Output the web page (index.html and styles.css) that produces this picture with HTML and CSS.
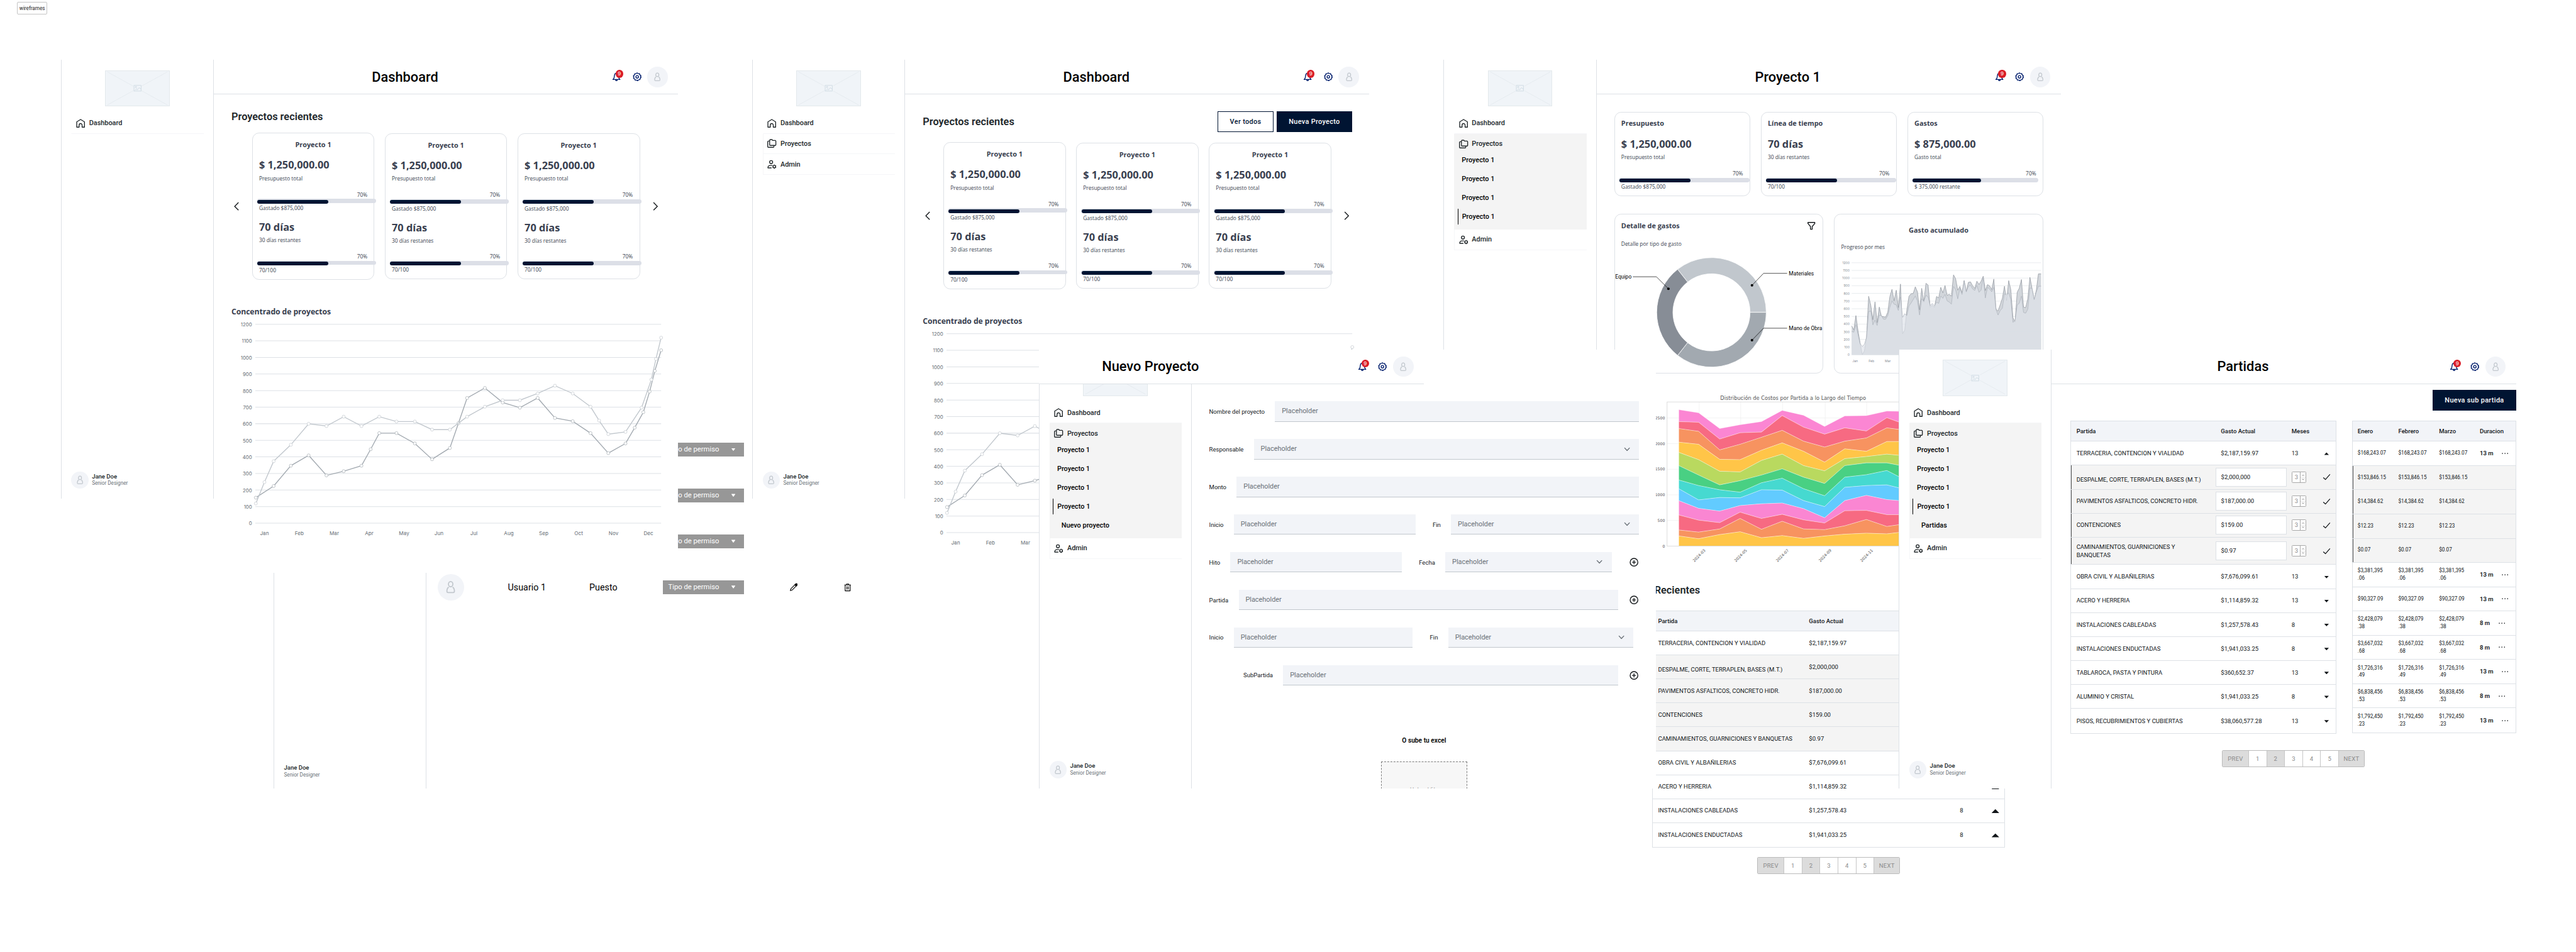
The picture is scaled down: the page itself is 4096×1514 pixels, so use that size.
FILE: index.html
```html
<!DOCTYPE html>
<html lang="es">
<head>
<meta charset="utf-8">
<title>wireframes</title>
<link rel="stylesheet" href="styles.css">
</head>
<body>
<div class="board">
<svg class="sprite" aria-hidden="true">
  <symbol id="i-bell" viewBox="0 0 24 24"><path d="M3.8 18.2h16.4l-2.6-3.4-1-6.3C16.200 5.500 14.400 3.500 12 3.500S7.800 5.500 7.400 8.500l-1 6.300z"/><path d="M9.800 18.800a2.200 2.200 0 0 0 4.400 0"/></symbol>
  <symbol id="i-gear" viewBox="0 0 24 24"><circle cx="12" cy="12" r="8.200"/><circle cx="12" cy="12" r="9.500" stroke-width="1.200" stroke-dasharray="3.200 2.770"/><circle cx="12" cy="12" r="3"/></symbol>
  <symbol id="i-user" viewBox="0 0 24 24"><ellipse cx="12" cy="7.300" rx="3.600" ry="4.300"/><path d="M8.800 12.300C6.500 13.500 5.800 16 5.800 19c0 1.500.7 2.200 2.200 2.200h8c1.500 0 2.200-.7 2.200-2.200 0-3-.7-5.500-3-6.700"/></symbol>
  <symbol id="i-home" viewBox="0 0 24 24"><path d="M3 21V8.500L12 3l9 5.500V21h-5.500v-5a3.500 3.500 0 0 0-7 0v5z"/></symbol>
  <symbol id="i-folder" viewBox="0 0 24 24"><path d="M8 3h4.500L14.500 5H20a1.500 1.500 0 0 1 1.500 1.500V15a1.500 1.500 0 0 1-1.500 1.500H8.500A1.500 1.500 0 0 1 7 15V4.500z"/><path d="M6.500 6.500H4A1.500 1.500 0 0 0 2.500 8v11.500A1.500 1.500 0 0 0 4 21h11.500a1.500 1.500 0 0 0 1.500-1.500v-2.500"/></symbol>
  <symbol id="i-admin" viewBox="0 0 24 24"><circle cx="10.500" cy="7" r="3.600"/><path d="M13 14.800H8.500c-3.500 0-5.500 1.700-5.500 5.700h8.500"/><circle cx="18" cy="17.500" r="3"/><path d="M18 12.700v2M18 20.300v2M13.900 15.100l1.700 1M20.400 18.900l1.700 1M13.900 19.900l1.700-1M20.400 16.100l1.700-1"/></symbol>
  <symbol id="i-left" viewBox="0 0 24 24"><path d="M16.500 3 7.500 12l9 9"/></symbol>
  <symbol id="i-right" viewBox="0 0 24 24"><path d="M7.500 3l9 9-9 9"/></symbol>
  <symbol id="i-down" viewBox="0 0 24 24"><path d="M6 9l6 6.500L18 9"/></symbol>
  <symbol id="i-plus" viewBox="0 0 24 24"><circle cx="12" cy="12" r="9"/><path d="M12 7.500v9M7.500 12h9"/></symbol>
  <symbol id="i-check" viewBox="0 0 24 24"><path d="M3.500 13.500 9 18.500 20.500 5.500"/></symbol>
  <symbol id="i-funnel" viewBox="0 0 24 24"><path d="M4 4h16v2.500l-6 7V20h-4v-6.500l-6-7z"/></symbol>
  <symbol id="i-dots" viewBox="0 0 24 24"><path d="M4 12h.01M12 12h.01M20 12h.01"/></symbol>
  <symbol id="i-pencil" viewBox="0 0 24 24"><path d="M3 21l1.500-5L15.500 5l3.500 3.500L8 19.500z"/><path d="M16 3.500l4.500 4.500L22 5.500a2.500 2.500 0 0 0-3.500-3.500z" fill="currentColor"/></symbol>
  <symbol id="i-trash" viewBox="0 0 24 24"><path d="M3 5h18M9 4.500V2.500h6v2M5 5v16.500h14V5M10 9v9M14 9v9"/></symbol>
  <symbol id="i-image" viewBox="0 0 20 16"><rect x="1.500" y="1.200" width="16.500" height="13.300"/><circle cx="6" cy="5" r="1.500"/><path d="M4 12.500l3.500-3.500 1.500 1.500M8.500 12.500l5-6 4.500 3.500"/></symbol>
</svg>

<div class="tag">wireframes</div>

<!-- Usuarios -->
<section class="frame frame--users">
  <aside class="side">
    <div class="profile profile--bare"><div><b>Jane Doe</b><span>Senior Designer</span></div></div>
  </aside>
  <main class="users">
    <div class="users__row"><span class="chip">Tipo de permiso<i class="tri tri--down"></i></span></div>
    <div class="users__row"><span class="chip">Tipo de permiso<i class="tri tri--down"></i></span></div>
    <div class="users__row"><span class="chip">Tipo de permiso<i class="tri tri--down"></i></span></div>
    <div class="users__row">
      <span class="avatar avatar--lg"><svg class="icon"><use href="#i-user"/></svg></span>
      <span class="users__name">Usuario 1</span><span class="users__job">Puesto</span>
      <span class="chip">Tipo de permiso<i class="tri tri--down"></i></span>
      <svg class="icon users__edit"><use href="#i-pencil"/></svg><svg class="icon users__del"><use href="#i-trash"/></svg>
    </div>
  </main>
</section>

<!-- Dashboard -->
<section class="frame frame--dash">
  <aside class="side">
    <div class="logo"><svg class="logo__x" viewBox="0 0 151 84"><path d="M3 2l145 80M148 2L3 82"/></svg><svg class="logo__img"><use href="#i-image"/></svg></div>
    <nav class="menu menu--plain">
      <a class="menu__item"><svg class="icon"><use href="#i-home"/></svg>Dashboard</a>
    </nav>
    <div class="profile"><span class="avatar avatar--sm"><svg class="icon"><use href="#i-user"/></svg></span><div><b>Jane Doe</b><span>Senior Designer</span></div></div>
  </aside>
  <main class="main main--tall">
    <header class="topbar"><h1>Dashboard</h1><div class="actions"><span class="bell"><svg class="icon"><use href="#i-bell"/></svg><em>9</em></span><svg class="icon gear"><use href="#i-gear"/></svg><span class="avatar"><svg class="icon"><use href="#i-user"/></svg></span></div></header>
    <div class="content">
      <div class="head"><h2>Proyectos recientes</h2></div>
      <div class="carousel">
        <svg class="icon"><use href="#i-left"/></svg>
        <article class="card card--first"><h3>Proyecto 1</h3><strong>$ 1,250,000.00</strong><p>Presupuesto total</p><p class="pct">70%</p><div class="bar"><i></i></div><p class="foot">Gastado $875,000</p><strong class="days">70 días</strong><p>30 días restantes</p><p class="pct">70%</p><div class="bar"><i></i></div><p class="foot last">70/100</p></article>
        <article class="card"><h3>Proyecto 1</h3><strong>$ 1,250,000.00</strong><p>Presupuesto total</p><p class="pct">70%</p><div class="bar"><i></i></div><p class="foot">Gastado $875,000</p><strong class="days">70 días</strong><p>30 días restantes</p><p class="pct">70%</p><div class="bar"><i></i></div><p class="foot last">70/100</p></article>
        <article class="card"><h3>Proyecto 1</h3><strong>$ 1,250,000.00</strong><p>Presupuesto total</p><p class="pct">70%</p><div class="bar"><i></i></div><p class="foot">Gastado $875,000</p><strong class="days">70 días</strong><p>30 días restantes</p><p class="pct">70%</p><div class="bar"><i></i></div><p class="foot last">70/100</p></article>
        <svg class="icon"><use href="#i-right"/></svg>
      </div>
      <h3 class="chart-title">Concentrado de proyectos</h3>
      <svg class="line-chart" viewBox="0 0 1004 520"></svg>
    </div>
  </main>
</section>

<!-- Dashboard, administrador -->
<section class="frame frame--dash2">
  <aside class="side">
    <div class="logo"><svg class="logo__x" viewBox="0 0 151 84"><path d="M3 2l145 80M148 2L3 82"/></svg><svg class="logo__img"><use href="#i-image"/></svg></div>
    <nav class="menu">
      <a class="menu__item"><svg class="icon"><use href="#i-home"/></svg>Dashboard</a>
      <a class="menu__item"><svg class="icon"><use href="#i-folder"/></svg>Proyectos</a>
      <a class="menu__item"><svg class="icon"><use href="#i-admin"/></svg>Admin</a>
    </nav>
    <div class="profile"><span class="avatar avatar--sm"><svg class="icon"><use href="#i-user"/></svg></span><div><b>Jane Doe</b><span>Senior Designer</span></div></div>
  </aside>
  <main class="main main--tall">
    <header class="topbar"><h1>Dashboard</h1><div class="actions"><span class="bell"><svg class="icon"><use href="#i-bell"/></svg><em>9</em></span><svg class="icon gear"><use href="#i-gear"/></svg><span class="avatar"><svg class="icon"><use href="#i-user"/></svg></span></div></header>
    <div class="content">
      <div class="head head--buttons"><h2>Proyectos recientes</h2><a class="btn btn--line">Ver todos</a><a class="btn">Nueva Proyecto</a></div>
      <div class="carousel">
        <svg class="icon"><use href="#i-left"/></svg>
        <article class="card card--first"><h3>Proyecto 1</h3><strong>$ 1,250,000.00</strong><p>Presupuesto total</p><p class="pct">70%</p><div class="bar"><i></i></div><p class="foot">Gastado $875,000</p><strong class="days">70 días</strong><p>30 días restantes</p><p class="pct">70%</p><div class="bar"><i></i></div><p class="foot last">70/100</p></article>
        <article class="card"><h3>Proyecto 1</h3><strong>$ 1,250,000.00</strong><p>Presupuesto total</p><p class="pct">70%</p><div class="bar"><i></i></div><p class="foot">Gastado $875,000</p><strong class="days">70 días</strong><p>30 días restantes</p><p class="pct">70%</p><div class="bar"><i></i></div><p class="foot last">70/100</p></article>
        <article class="card"><h3>Proyecto 1</h3><strong>$ 1,250,000.00</strong><p>Presupuesto total</p><p class="pct">70%</p><div class="bar"><i></i></div><p class="foot">Gastado $875,000</p><strong class="days">70 días</strong><p>30 días restantes</p><p class="pct">70%</p><div class="bar"><i></i></div><p class="foot last">70/100</p></article>
        <svg class="icon"><use href="#i-right"/></svg>
      </div>
      <h3 class="chart-title">Concentrado de proyectos</h3>
      <svg class="line-chart" viewBox="0 0 1004 520"></svg>
    </div>
  </main>
</section>

<!-- Proyecto 1 -->
<section class="frame frame--project">
  <aside class="side">
    <div class="logo"><svg class="logo__x" viewBox="0 0 151 84"><path d="M3 2l145 80M148 2L3 82"/></svg><svg class="logo__img"><use href="#i-image"/></svg></div>
    <nav class="menu">
      <a class="menu__item"><svg class="icon"><use href="#i-home"/></svg>Dashboard</a>
      <div class="menu__group">
        <a class="menu__item"><svg class="icon"><use href="#i-folder"/></svg>Proyectos</a>
        <a class="sub">Proyecto 1</a><a class="sub">Proyecto 1</a><a class="sub">Proyecto 1</a><a class="sub sub--on">Proyecto 1</a>
      </div>
      <a class="menu__item"><svg class="icon"><use href="#i-admin"/></svg>Admin</a>
    </nav>
  </aside>
  <main class="main">
    <header class="topbar"><h1>Proyecto 1</h1><div class="actions"><span class="bell"><svg class="icon"><use href="#i-bell"/></svg><em>9</em></span><svg class="icon gear"><use href="#i-gear"/></svg><span class="avatar"><svg class="icon"><use href="#i-user"/></svg></span></div></header>
    <div class="content">
      <div class="stats">
        <article class="card"><h3>Presupuesto</h3><strong>$ 1,250,000.00</strong><p>Presupuesto total</p><p class="pct">70%</p><div class="bar"><i></i></div><p class="foot">Gastado $875,000</p></article>
        <article class="card"><h3>Línea de tiempo</h3><strong class="plain">70 días</strong><p>30 días restantes</p><p class="pct">70%</p><div class="bar"><i></i></div><p class="foot">70/100</p></article>
        <article class="card"><h3>Gastos</h3><strong>$ 875,000.00</strong><p>Gasto total</p><p class="pct">70%</p><div class="bar bar--short"><i></i></div><p class="foot">$ 375,000 restante</p></article>
      </div>
      <div class="panels">
        <article class="panel">
          <div class="panel__head"><h3>Detalle de gastos</h3><svg class="icon"><use href="#i-funnel"/></svg></div>
          <p>Detalle por tipo de gasto</p>
          <svg class="donut" viewBox="0 0 488 280"></svg>
        </article>
        <article class="panel panel--area">
          <h3>Gasto acumulado</h3>
          <p>Progreso por mes</p>
          <svg class="area-chart" viewBox="0 0 488 260"></svg>
        </article>
      </div>
      <div class="overview">
        <svg class="stack-chart" viewBox="0 0 585 430"></svg>
        <h2>Recientes</h2>
        <table class="grid grid--recent">
          <tr><th>Partida</th><th>Gasto Actual</th><th></th><th></th></tr>
          <tr><td>TERRACERIA, CONTENCION Y VIALIDAD</td><td>$2,187,159.97</td><td></td><td></td></tr>
          <tr class="child"><td class="low">DESPALME, CORTE, TERRAPLEN, BASES (M.T.)</td><td>$2,000,000</td><td></td><td></td></tr>
          <tr class="child"><td>PAVIMENTOS ASFALTICOS, CONCRETO HIDR.</td><td>$187,000.00</td><td></td><td></td></tr>
          <tr class="child"><td>CONTENCIONES</td><td>$159.00</td><td></td><td></td></tr>
          <tr class="child"><td>CAMINAMIENTOS, GUARNICIONES Y BANQUETAS</td><td>$0.97</td><td></td><td></td></tr>
          <tr><td>OBRA CIVIL Y ALBAÑILERIAS</td><td>$7,676,099.61</td><td></td><td></td></tr>
          <tr><td>ACERO Y HERRERIA</td><td>$1,114,859.32</td><td>13</td><td><i class="tri tri--big"></i></td></tr>
          <tr><td>INSTALACIONES CABLEADAS</td><td>$1,257,578.43</td><td>8</td><td><i class="tri tri--big"></i></td></tr>
          <tr><td>INSTALACIONES ENDUCTADAS</td><td>$1,941,033.25</td><td>8</td><td><i class="tri tri--big"></i></td></tr>
        </table>
        <div class="pager"><span class="on wide">PREV</span><span>1</span><span class="on">2</span><span>3</span><span>4</span><span>5</span><span class="on wide">NEXT</span></div>
      </div>
    </div>
  </main>
</section>

<!-- Nuevo proyecto -->
<section class="frame frame--new">
  <header class="topbar topbar--over"><h1>Nuevo Proyecto</h1><div class="actions"><span class="bell"><svg class="icon"><use href="#i-bell"/></svg><em>9</em></span><svg class="icon gear"><use href="#i-gear"/></svg><span class="avatar"><svg class="icon"><use href="#i-user"/></svg></span></div></header>
  <aside class="side">
    <div class="logo"><svg class="logo__x" viewBox="0 0 151 84"><path d="M3 2l145 80M148 2L3 82"/></svg></div>
    <nav class="menu">
      <a class="menu__item"><svg class="icon"><use href="#i-home"/></svg>Dashboard</a>
      <div class="menu__group">
        <a class="menu__item"><svg class="icon"><use href="#i-folder"/></svg>Proyectos</a>
        <a class="sub">Proyecto 1</a><a class="sub">Proyecto 1</a><a class="sub">Proyecto 1</a><a class="sub sub--on">Proyecto 1</a><a class="sub sub--deep">Nuevo proyecto</a>
      </div>
      <a class="menu__item"><svg class="icon"><use href="#i-admin"/></svg>Admin</a>
    </nav>
    <div class="profile"><span class="avatar avatar--sm"><svg class="icon"><use href="#i-user"/></svg></span><div><b>Jane Doe</b><span>Senior Designer</span></div></div>
  </aside>
  <main class="form">
    <div class="form__row"><label class="field"><span>Nombre del proyecto</span><b>Placeholder</b></label></div>
    <div class="form__row"><label class="field"><span>Responsable</span><b>Placeholder<svg class="icon"><use href="#i-down"/></svg></b></label></div>
    <div class="form__row"><label class="field"><span>Monto</span><b>Placeholder</b></label></div>
    <div class="form__row"><label class="field"><span>Inicio</span><b>Placeholder</b></label><label class="field"><span>Fin</span><b>Placeholder<svg class="icon"><use href="#i-down"/></svg></b></label></div>
    <div class="form__row"><label class="field"><span>Hito</span><b>Placeholder</b></label><label class="field"><span>Fecha</span><b>Placeholder<svg class="icon"><use href="#i-down"/></svg></b></label><svg class="icon"><use href="#i-plus"/></svg></div>
    <div class="form__row form__row--tight"><label class="field"><span>Partida</span><b>Placeholder</b></label><svg class="icon"><use href="#i-plus"/></svg></div>
    <div class="form__row form__row--inset"><label class="field"><span>Inicio</span><b>Placeholder</b></label><label class="field"><span>Fin</span><b>Placeholder<svg class="icon"><use href="#i-down"/></svg></b></label></div>
    <div class="form__row form__row--tight form__row--child"><label class="field"><span>SubPartida</span><b>Placeholder</b></label><svg class="icon"><use href="#i-plus"/></svg></div>
    <h4>O sube tu excel</h4>
    <div class="drop">Upload file</div>
  </main>
</section>

<!-- Partidas -->
<section class="frame frame--items">
  <aside class="side">
    <div class="logo"><svg class="logo__x" viewBox="0 0 151 84"><path d="M3 2l145 80M148 2L3 82"/></svg><svg class="logo__img"><use href="#i-image"/></svg></div>
    <nav class="menu">
      <a class="menu__item"><svg class="icon"><use href="#i-home"/></svg>Dashboard</a>
      <div class="menu__group">
        <a class="menu__item"><svg class="icon"><use href="#i-folder"/></svg>Proyectos</a>
        <a class="sub">Proyecto 1</a><a class="sub">Proyecto 1</a><a class="sub">Proyecto 1</a><a class="sub sub--on">Proyecto 1</a><a class="sub sub--deep">Partidas</a>
      </div>
      <a class="menu__item"><svg class="icon"><use href="#i-admin"/></svg>Admin</a>
    </nav>
    <div class="profile"><span class="avatar avatar--sm"><svg class="icon"><use href="#i-user"/></svg></span><div><b>Jane Doe</b><span>Senior Designer</span></div></div>
  </aside>
  <main class="main">
    <header class="topbar"><h1>Partidas</h1><div class="actions"><span class="bell"><svg class="icon"><use href="#i-bell"/></svg><em>9</em></span><svg class="icon gear"><use href="#i-gear"/></svg><span class="avatar"><svg class="icon"><use href="#i-user"/></svg></span></div></header>
    <div class="items">
      <a class="btn btn--sub">Nueva sub partida</a>
      <div class="items__tables">
        <table class="grid grid--items">
          <tr><th>Partida</th><th>Gasto Actual</th><th>Meses</th><th></th></tr>
          <tr><td>TERRACERIA, CONTENCION Y VIALIDAD</td><td>$2,187,159.97</td><td>13</td><td><i class="tri"></i></td></tr>
          <tr class="child"><td class="low">DESPALME, CORTE, TERRAPLEN, BASES (M.T.)</td><td><span class="input">$2,000,000</span></td><td><span class="spin">3<i><svg viewBox="0 0 7 12"><path d="M1.500 3.500l2-2 2 2M1.500 8.500l2 2 2-2"/></svg></i></span></td><td><svg class="icon"><use href="#i-check"/></svg></td></tr>
          <tr class="child"><td>PAVIMENTOS ASFALTICOS, CONCRETO HIDR.</td><td><span class="input">$187,000.00</span></td><td><span class="spin">3<i><svg viewBox="0 0 7 12"><path d="M1.500 3.500l2-2 2 2M1.500 8.500l2 2 2-2"/></svg></i></span></td><td><svg class="icon"><use href="#i-check"/></svg></td></tr>
          <tr class="child"><td>CONTENCIONES</td><td><span class="input">$159.00</span></td><td><span class="spin">3<i><svg viewBox="0 0 7 12"><path d="M1.500 3.500l2-2 2 2M1.500 8.500l2 2 2-2"/></svg></i></span></td><td><svg class="icon"><use href="#i-check"/></svg></td></tr>
          <tr class="child child--tall"><td>CAMINAMIENTOS, GUARNICIONES Y<br>BANQUETAS</td><td><span class="input">$0.97</span></td><td><span class="spin">3<i><svg viewBox="0 0 7 12"><path d="M1.500 3.500l2-2 2 2M1.500 8.500l2 2 2-2"/></svg></i></span></td><td><svg class="icon"><use href="#i-check"/></svg></td></tr>
          <tr><td>OBRA CIVIL Y ALBAÑILERIAS</td><td>$7,676,099.61</td><td>13</td><td><i class="tri tri--down"></i></td></tr>
          <tr><td>ACERO Y HERRERIA</td><td>$1,114,859.32</td><td>13</td><td><i class="tri tri--down"></i></td></tr>
          <tr><td>INSTALACIONES CABLEADAS</td><td>$1,257,578.43</td><td>8</td><td><i class="tri tri--down"></i></td></tr>
          <tr><td>INSTALACIONES ENDUCTADAS</td><td>$1,941,033.25</td><td>8</td><td><i class="tri tri--down"></i></td></tr>
          <tr><td>TABLAROCA, PASTA Y PINTURA</td><td>$360,652.37</td><td>13</td><td><i class="tri tri--down"></i></td></tr>
          <tr><td>ALUMINIO Y CRISTAL</td><td>$1,941,033.25</td><td>8</td><td><i class="tri tri--down"></i></td></tr>
          <tr><td>PISOS, RECUBRIMIENTOS Y CUBIERTAS</td><td>$38,060,577.28</td><td>13</td><td><i class="tri tri--down"></i></td></tr>
        </table>
        <table class="grid grid--months">
          <tr><th>Enero</th><th>Febrero</th><th>Marzo</th><th>Duracion</th></tr>
          <tr><td>$168,243.07</td><td>$168,243.07</td><td>$168,243.07</td><td><b>13 m</b><svg class="icon"><use href="#i-dots"/></svg></td></tr>
          <tr class="child"><td>$153,846.15</td><td>$153,846.15</td><td>$153,846.15</td><td></td></tr>
          <tr class="child"><td>$14,384.62</td><td>$14,384.62</td><td>$14,384.62</td><td></td></tr>
          <tr class="child"><td>$12.23</td><td>$12.23</td><td>$12.23</td><td></td></tr>
          <tr class="child"><td>$0.07</td><td>$0.07</td><td>$0.07</td><td></td></tr>
          <tr><td>$3,381,395<br>.06</td><td>$3,381,395<br>.06</td><td>$3,381,395<br>.06</td><td><b>13 m</b><svg class="icon"><use href="#i-dots"/></svg></td></tr>
          <tr><td>$90,327.09</td><td>$90,327.09</td><td>$90,327.09</td><td><b>13 m</b><svg class="icon"><use href="#i-dots"/></svg></td></tr>
          <tr><td>$2,428,079<br>.38</td><td>$2,428,079<br>.38</td><td>$2,428,079<br>.38</td><td><b>8 m</b><svg class="icon"><use href="#i-dots"/></svg></td></tr>
          <tr><td>$3,667,032<br>.68</td><td>$3,667,032<br>.68</td><td>$3,667,032<br>.68</td><td><b>8 m</b><svg class="icon"><use href="#i-dots"/></svg></td></tr>
          <tr><td>$1,726,316<br>.49</td><td>$1,726,316<br>.49</td><td>$1,726,316<br>.49</td><td><b>13 m</b><svg class="icon"><use href="#i-dots"/></svg></td></tr>
          <tr><td>$6,838,456<br>.53</td><td>$6,838,456<br>.53</td><td>$6,838,456<br>.53</td><td><b>8 m</b><svg class="icon"><use href="#i-dots"/></svg></td></tr>
          <tr><td>$1,792,450<br>.23</td><td>$1,792,450<br>.23</td><td>$1,792,450<br>.23</td><td><b>13 m</b><svg class="icon"><use href="#i-dots"/></svg></td></tr>
        </table>
      </div>
      <div class="pager"><span class="on wide">PREV</span><span>1</span><span class="on">2</span><span>3</span><span>4</span><span>5</span><span class="on wide">NEXT</span></div>
    </div>
  </main>
</section>
</div>
<script src="charts.js"></script>
</body>
</html>
```
FILE: styles.css
```css
* { box-sizing: border-box; }
html { overflow: hidden; background: #fff; }
body { width: 4096px; height: 1514px; margin: 0; overflow: hidden; background: #fff; }
.board {
  position: relative;
  width: 6009px;
  height: 2220px;
  overflow: hidden;
  zoom: 0.68153;
  background: #fff;
  color: #121619;
  font-family: Roboto, "Liberation Sans", sans-serif;
}
h1, h2, h3, h4, p { margin: 0; }
.sprite { position: absolute; width: 0; height: 0; }
.icon { width: 24px; height: 24px; flex: none; fill: none; stroke: currentColor; stroke-width: 2; stroke-linejoin: round; }

.tag {
  position: absolute; left: 40px; top: 4px; width: 70px; height: 30px;
  border: 1px solid #c4c4c4; border-radius: 3px;
  font-size: 12px; line-height: 28px; text-align: center; color: #222;
}

/* frames on the canvas */
.frame { position: absolute; display: flex; width: 1440px; height: 1024px; }
.frame--users { left: 638px; top: 816px; }
.frame--dash { left: 142px; top: 140px; }
.frame--dash2 { left: 1755px; top: 140px; }
.frame--project { left: 3368px; top: 140px; }
.frame--new { left: 2424px; top: 816px; overflow: hidden; background: #fff; }
.frame--items { left: 4430px; top: 816px; background: #fff; }

/* sidebar */
.side {
  display: flex; flex-direction: column; flex: none;
  width: 357px; height: 1024px; padding: 24px 23px;
  border: solid #dde1e6; border-width: 0 1px; background: #fff;
}
.logo {
  position: relative; align-self: center; flex: none; width: 151px; height: 84px;
  border: 1px solid #e3e9ec; background: #f0f4f8;
  display: flex; align-items: center; justify-content: center;
}
.logo__x { position: absolute; inset: 0; width: 100%; height: 100%; fill: none; stroke: #e1e7eb; stroke-width: 1; }
.logo__img { position: relative; width: 20px; height: 16px; background: #f0f4f8; fill: none; stroke: #c3d2dc; stroke-width: 1; }
.menu { margin-top: 16px; width: 309px; }
.menu__item {
  display: flex; align-items: center; gap: 8px; height: 48px; padding-left: 8px;
  border-bottom: 2px solid #f5f6f8; border-left: 2px solid #f5f6f8;
  font-size: 16px; font-weight: 500; color: #21272a;
}
.menu__item:first-child { border-left-color: transparent; }
.menu__group { padding-bottom: 4px; background: #f4f4f4; }
.menu__group .menu__item { height: 40px; padding-top: 8px; border-color: transparent; border-bottom: 0; margin-bottom: 4px; }
.sub { display: flex; align-items: center; height: 36px; margin: 0 0 8px 8px; padding-left: 10px; font-size: 16px; font-weight: 500; color: #000; }
.sub--on { border-left: 1px solid #000; padding-left: 9px; }
.sub--deep { padding-left: 20px; }
.profile { display: flex; align-items: center; gap: 8px; margin-top: auto; font-size: 12px; line-height: 16px; color: #697077; }
.profile > div { margin-top: -1px; }
.profile b { display: block; font-size: 14px; font-weight: 500; color: #21272a; line-height: 17px; }
.profile span { white-space: nowrap; }
.profile--bare { height: 32px; }
.avatar {
  display: flex; align-items: center; justify-content: center; flex: none;
  width: 48px; height: 48px; border-radius: 50%; background: #f2f4f8; color: #c1c7cd;
}
.avatar .icon { stroke-width: 1.8; }
.avatar--sm { width: 40px; height: 40px; }
.avatar--lg { width: 62px; height: 62px; }
.avatar--lg .icon { width: 34px; height: 34px; }

/* top bar */
.main { flex: none; width: 1083px; height: 1024px; background: #fff; }
.main--tall { height: 1197px; }
.topbar { display: flex; align-items: center; width: 100%; height: 80px; border-bottom: 1px solid #dde1e6; background: #fff; }
.topbar--over { position: absolute; left: -186px; top: 0; z-index: 1; width: 1084px; }
.topbar h1 { width: 892px; text-align: center; font-size: 32px; font-weight: 500; color: #000; }
.actions { display: flex; align-items: center; margin-left: auto; padding-right: 24px; color: #001d6c; }
.bell { position: relative; display: flex; margin-right: 24px; }
.bell em {
  position: absolute; left: 10px; top: -4px; width: 18px; height: 18px; border-radius: 50%;
  background: #da1e28; color: #fff; font: 12px/18px Inter, sans-serif; text-align: center;
}
.gear { margin-right: 12px; }

/* content */
.content { padding: 40px 41px 0; }
.head { display: flex; align-items: center; height: 26px; }
.head--buttons { height: 48px; gap: 8px; }
h2 { font-size: 24px; font-weight: 600; line-height: 26px; color: #21272a; }
.head h2 { flex: 1; }
.btn {
  display: flex; align-items: center; justify-content: center; height: 48px; width: 175px;
  background: #001432; border: 2px solid #001432; color: #fff;
  font-size: 16px; font-weight: 500; letter-spacing: .5px;
}
.btn--line { width: 130px; background: #fff; color: #001432; }
.carousel { display: flex; align-items: center; gap: 24px; margin-top: 24px; color: #121619; }
.card, .panel {
  border: 1px solid #dde1e6; border-radius: 16px; background: #fff;
  font-family: "Open Sans", "Noto Sans", sans-serif; color: #393f50;
}
.card { flex: 1; padding: 14px 15px 12px; }
.card h3, .panel h3, .chart-title { font-family: "Open Sans", "Noto Sans", sans-serif; font-size: 16px; font-weight: 700; line-height: 24px; color: #393f50; }
.carousel h3 { text-align: center; }
.card strong { display: block; margin-top: 21px; margin-bottom: 5px; font-size: 24px; line-height: 32px; font-weight: 700; white-space: nowrap; }
.card .days { margin-top: 20px; margin-bottom: 4px; }
.card p { font-size: 12.300px; line-height: 18px; }
.card .pct { margin-top: 20px; text-align: right; }
.card .foot { margin-top: 3px; }
.card .last { margin-top: 1px; }
.card--first .last { margin-top: 3.500px; }
.bar { margin: 1px -20px 0 -5px; height: 10px; border-radius: 5px; background: #dcdfe7; }
.bar i { display: block; position: relative; left: 1px; top: 1.500px; width: 165px; height: 8.500px; border-radius: 4.500px; background: #001432; }
.card--first .bar i { top: 2.500px; }
.chart-title { margin: 62px 0 1px; font-size: 18px; line-height: 26px; letter-spacing: -.15px; }
.line-chart { display: block; width: 1004px; height: 520px; overflow: visible; font: 12px Inter, sans-serif; fill: #697077; }

/* project */
.stats { display: flex; gap: 25px; margin-top: 1px; }
.stats .card { flex: 1 1 0; min-width: 0; }
.stats .card .bar { margin-right: -16px; }
.stats .card .bar--short { margin-right: -5px; }
.bar--short i { width: 160px; }
.stats .card .foot { margin-top: 1px; }
.panels { display: flex; gap: 25px; height: 373px; margin-top: 41px; }
.panel { flex: 1 1 0; min-width: 0; height: 373px; padding: 15px 15px 0; }
.panel__head { display: flex; align-items: center; justify-content: space-between; height: 24px; color: #121619; }
.panel p { margin-top: 22px; font-size: 12.300px; line-height: 18px; }
.panel > svg { display: block; margin-left: -16px; width: 488px; overflow: visible; }
.panel--area { padding-top: 25px; }
.panel--area h3 { text-align: center; }
.panel--area p { margin-top: 19px; }
.donut { height: 280px; margin-top: 10px; font: 12.500px Roboto, sans-serif; }
.area-chart { height: 260px; font: 7.500px Inter, sans-serif; fill: #878d96; }
.overview { width: 823px; margin-left: 89px; }
.stack-chart { display: block; width: 585px; height: 430px; margin-top: 29px; font: 9px "DejaVu Sans", sans-serif; fill: #555; }
.overview h2 { margin: 34px 0 34px 5px; }

/* tables */
.grid { border-collapse: separate; border-spacing: 0; table-layout: fixed; border: 1px solid #dde1e6; font-size: 14px; line-height: 20px; color: #121619; }
.grid th { height: 47px; padding: 0 0 0 12px; text-align: left; font-weight: 500; background: #f2f4f8; border-bottom: 1px solid #dde1e6; }
.grid td { height: 56px; padding: 0 0 0 12px; border-bottom: 1px solid #dde1e6; white-space: nowrap; }
.grid tr:last-child td { border-bottom: 0; }
.grid .child td { background: #f4f4f4; }
.grid .low { padding-top: 12px; }
.tri { display: inline-block; width: 11px; height: 6px; background: currentColor; clip-path: polygon(50% 0, 100% 100%, 0 100%); vertical-align: middle; }
.tri--down { clip-path: polygon(0 0, 100% 0, 50% 100%); }
.tri--big { width: 18px; height: 9px; }
.grid--recent { width: 823px; }
.grid--recent td { height: 55.900px; }
.grid--recent th:first-child { width: 352px; }
.grid--recent th:nth-child(2) { width: 352px; }
.grid--recent th:nth-child(3) { width: 74px; }
.grid--items { width: 620px; }
.grid--items th:first-child { width: 337px; }
.grid--items th:nth-child(2) { width: 165px; }
.grid--items th:nth-child(3) { width: 72px; }
.grid--items td:last-child { text-align: center; padding: 0; }
.grid--items .icon { width: 22px; height: 22px; display: block; margin: auto; color: #121619; }
.grid--items .child td:first-child, .grid--months .child td:first-child { box-shadow: inset 1px 0 0 #000; }
.grid--items .child--tall td { height: 64px; }
.grid--months { width: 379px; }
.grid--months th { width: 95px; }
.grid--months tr td { height: 56.600px; font-size: 12px; line-height: 17px; }
.grid--months b { display: inline-block; vertical-align: middle; font-size: 14px; font-weight: 600; margin-right: 19px; }
.grid--months .icon { width: 18px; height: 18px; vertical-align: middle; stroke-width: 3; stroke-linecap: round; }
.input { display: flex; align-items: center; width: 165px; height: 44px; margin-left: -12px; padding-left: 11px; border: 1px solid #dde1e6; background: #fff; }
.spin { display: flex; align-items: center; width: 34px; height: 26px; padding-left: 6px; border: 1px solid #a8a8a8; border-radius: 2px; background: #fff; color: #8d8d8d; }
.spin i { display: flex; align-items: center; justify-content: center; width: 13px; height: 24px; margin-left: auto; border-left: 1px solid #a8a8a8; background: linear-gradient(#ddd, #ddd) center / 100% 1px no-repeat; }
.spin svg { width: 9px; height: 18px; fill: none; stroke: #777; stroke-width: .9; }
.pager { display: flex; width: 333px; height: 40px; margin: 22px auto 0; border: 1px solid #bbb; border-radius: 3px; overflow: hidden; font-size: 14px; letter-spacing: .4px; color: #8a8a8a; }
.pager span { flex: 1; display: flex; align-items: center; justify-content: center; }
.pager span + span { border-left: 1px solid #c6c6c6; }
.pager .wide { flex: 0 0 60px; }
.pager .on { background: #dcdcdc; }

/* partidas */
.items { padding: 14px 0 0 44px; }
.btn--sub { width: 194px; margin-left: auto; }
.items__tables { display: flex; justify-content: space-between; align-items: flex-start; margin-top: 24px; }
.items .pager { margin-top: 39px; }

/* new project form */
.form { display: flex; flex-direction: column; gap: 40px; width: 1083px; padding: 120px 40px 0; }
.form__row { display: flex; align-items: center; gap: 40px; height: 48px; }
.form__row--tight { gap: 24px; }
.form__row--inset { margin-right: 13px; }
.form__row--child { padding-left: 80px; }
.field { flex: 1 1 0; display: flex; align-items: center; gap: 24px; font-size: 14px; color: #121619; }
.field b {
  flex: 1; display: flex; align-items: center; justify-content: space-between; height: 48px; padding: 0 16px;
  background: #f2f4f8; border-bottom: 1px solid #c1c7cd; font-size: 16px; font-weight: 400; color: #697077;
}
.form h4 { margin-top: 80px; font-size: 15px; line-height: 18px; font-weight: 600; text-align: center; color: #000; }
.drop { flex: none; align-self: center; width: 200px; height: 140px; margin-top: -1px; padding-top: 56px; border: 2px dashed #7a7a7a; background: #f7f7f7; font-size: 14px; line-height: 18px; text-align: center; color: #b0b0b0; }

/* users */
.users { width: 1083px; padding-top: 179.500px; background: #fff; }
.users__row { display: flex; align-items: center; height: 107px; padding-left: 26px; font-size: 21px; color: #000; }
.users__row:not(:last-child) { padding-left: 551px; }
.users__name { margin-left: 102px; width: 190px; }
.users__job { width: 171px; }
.chip { display: flex; align-items: center; justify-content: space-between; width: 190px; height: 32px; padding: 0 20px 0 13px; background: #979797; color: #fff; font-size: 16.500px; }
.chip .tri { width: 10px; height: 7px; }
.users__edit { width: 20px; margin-left: 105px; }
.users__del { width: 20px; margin-left: 107px; }
```
FILE: charts.js
```js
const NS = 'http://www.w3.org/2000/svg';
function add(parent, name, attrs, text) {
  const node = document.createElementNS(NS, name);
  for (const key in attrs) node.setAttribute(key, attrs[key]);
  if (text !== undefined) node.textContent = text;
  parent.appendChild(node);
  return node;
}
const join = pts => pts.map(p => p[0].toFixed(1) + ',' + p[1].toFixed(1)).join(' ');

// Projects line chart
const dark = [[445,611],[476,575],[506,512],[537,480],[568,542],[598,529],[629,512],[645,461],[660,411],[690,411],[722,443],[752,492],[783,457],[798,380],[813,302],[844,271],[875,316],[905,332],[936,302],[966,364],[997,374],[1028,411],[1059,473],[1089,443],[1105,394],[1120,346],[1131,282],[1140,218],[1151,154]];
const light = [[445,629],[460,563],[476,498],[506,447],[537,382],[568,389],[598,360],[629,389],[660,360],[690,375],[722,375],[752,400],[783,400],[813,360],[844,329],[875,309],[905,309],[936,288],[966,264],[997,288],[1028,329],[1043,372],[1059,414],[1089,407],[1117,332],[1134,245],[1142,181],[1151,115]];
const months = ['Jan','Feb','Mar','Apr','May','Jun','Jul','Aug','Sep','Oct','Nov','Dec'];
document.querySelectorAll('.line-chart').forEach(svg => {
  for (let i = 0; i <= 12; i++) {
    const y = 14.3 + i * 38.67;
    add(svg, 'line', {x1: 55.6, x2: 1002.5, y1: y, y2: y, stroke: '#dde1e6', 'stroke-width': 1.5});
    add(svg, 'text', {x: 48, y: y + 5, 'text-anchor': 'end', 'font-size': 11.5}, String(1200 - i * 100));
  }
  months.forEach((m, i) => add(svg, 'text', {x: 77 + i * 81.45, y: 506, 'text-anchor': 'middle'}, m));
  [[dark, '#a2a9b0'], [light, '#c1c7cd']].forEach(([data, color]) => {
    const pts = data.map(([x, y]) => [55.6 + (x - 444) * 1.3393, 14.3 + (y - 73.5) * 0.7526]);
    add(svg, 'polyline', {points: join(pts), fill: 'none', stroke: color, 'stroke-width': 2});
    pts.forEach(p => add(svg, 'circle', {cx: p[0], cy: p[1], r: 3.6, fill: '#fff', stroke: color, 'stroke-width': 1}));
  });
});

// Expenses donut
{
  const svg = document.querySelector('.donut');
  const cx = 226.5, cy = 139, R = 127.8, r = 90;
  const at = (rad, a) => (cx + rad * Math.cos(a)).toFixed(2) + ' ' + (cy + rad * Math.sin(a)).toFixed(2);
  const k = 128.2 * Math.PI / 180;
  [[-k, 0, '#c1c7cd', 0], [0, k, '#a2a9b0', 0], [k, 2 * Math.PI - k, '#878d96', 0]].forEach(([a, b, color]) => {
    add(svg, 'path', {d: `M${at(R, a)}A${R} ${R} 0 0 1 ${at(R, b)}L${at(r, b)}A${r} ${r} 0 0 0 ${at(r, a)}Z`, fill: color, stroke: '#fff', 'stroke-width': 1.2});
  });
  [[43, 98, 126, 56, 84, 'Equipo', 40, 'end'], [403, 348, 321, 48, 76, 'Materiales', 407, 'start'], [403, 348, 321, 176, 204, 'Mano de Obra', 407, 'start']].forEach(c => {
    add(svg, 'polyline', {points: `${c[0]},${c[3]} ${c[1]},${c[3]} ${c[2]},${c[4]}`, fill: 'none', stroke: '#000'});
    add(svg, 'circle', {cx: c[2], cy: c[4], r: 3});
    add(svg, 'text', {x: c[6], y: c[3] + 4.5, 'text-anchor': c[7]}, c[5]);
  });
}

// Accumulated expenses
{
  const svg = document.querySelector('.area-chart');
  const top = [510,538,438,545,632,711,685,590,303,365,467,342,487,378,442,446,449,414,305,254,335,260,382,217,565,540,400,303,285,283,236,272,398,247,343,212,223,378,365,380,304,314,240,279,227,296,289,302,153,180,260,234,277,192,269,205,202,229,248,197,220,197,162,263,221,230,256,182,392,406,361,318,232,333,193,256,452,483,274,246,185,378,382,320,170,247,327,262,146,146];
  const low = [549,554,502,572,635,654,639,590,410,406,503,470,507,435,438,463,463,438,378,335,358,362,402,307,450,425,438,370,350,325,301,335,434,320,338,296,307,368,353,370,344,352,301,317,289,335,343,358,234,257,321,247,290,196,272,233,225,251,262,226,275,259,170,315,240,252,271,240,395,434,402,387,286,293,279,325,485,473,363,352,301,416,421,393,244,248,325,273,232,232];
  const L = 40, W = 442, T = 26.2;
  for (let i = 0; i <= 12; i++) {
    const y = T + i * 17.9;
    add(svg, 'line', {x1: L, x2: L + W, y1: y, y2: y, stroke: '#dde1e6'});
    add(svg, 'text', {x: 35.3, y: y + 2.8, 'text-anchor': 'end'}, String(1200 - i * 100));
  }
  ['Jan', 'Feb', 'Mar'].forEach((m, i) => add(svg, 'text', {x: 48 + i * 38.2, y: T + 231.5, 'text-anchor': 'middle'}, m));
  [[top, '#d0d4d9', 0.95, '#878d96'], [low, '#dee3e9', 0.7, '#a9b0b8']].forEach(([data, fill, alpha, stroke]) => {
    const pts = data.map((y, i) => [i === data.length - 1 ? L + W : L + i * 4.951, T + (y - 68) / 3]);
    add(svg, 'polygon', {points: join([[L, T + 214.8], ...pts, [L + W, T + 214.8]]), fill, 'fill-opacity': alpha});
    add(svg, 'polyline', {points: join(pts), fill: 'none', stroke});
  });
}

// Cost distribution
{
  const svg = document.querySelector('.stack-chart');
  const ox = 3855, oy = 900;
  const X = [167,233,303,371,442,511,582,652,719,791,859,930].map(x => 3800 + x * 0.7015 - ox);
  const Y = y => 800 + y * 0.8163 - oy;
  const layers = [
    ['#fb86d3', [190,199,244,233,224,192,206,238,208,207,194,195]],
    ['#f76a82', [224,226,274,256,254,207,240,260,242,251,213,235]],
    ['#f79360', [244,252,305,289,269,249,280,297,280,271,242,250]],
    ['#ffc548', [283,289,332,333,306,285,309,340,302,309,281,281]],
    ['#b9d95f', [312,333,366,368,335,317,350,365,330,324,317,323]],
    ['#49d083', [350,377,405,393,377,359,383,401,350,342,342,354]],
    ['#46d9d0', [391,407,419,426,399,386,416,436,383,376,364,395]],
    ['#62cbff', [416,448,441,442,419,420,450,467,412,407,405,420]],
    ['#fa86d2', [450,472,480,464,459,457,473,499,450,435,447,452]],
    ['#f76a82', [491,506,513,483,501,489,505,514,479,478,490,490]],
    ['#f79360', [534,540,531,501,532,509,531,533,522,504,524,515]],
    ['#ffc548', [551,559,547,539,556,550,558,551,546,543,545,538]]
  ];
  const left = 3889.8 - ox, base = Y(580);
  add(svg, 'text', {x: 329, y: 33, 'text-anchor': 'middle', 'font-size': 12, textLength: 340, lengthAdjust: 'spacingAndGlyphs'}, 'Distribución de Costos por Partida a lo Largo del Tiempo');
  for (let i = 0; i <= 5; i++) {
    const y = base - i * 59.8;
    add(svg, 'line', {x1: left, x2: 585, y1: y, y2: y, stroke: '#eee'});
    add(svg, 'text', {x: left - 5, y: y + 3.2, 'text-anchor': 'end'}, String(i * 500));
  }
  ['2024-03', '2024-05', '2024-07', '2024-09', '2024-11'].forEach((t, i) => {
    const x = [235, 373, 512, 654, 792][i] * 0.7015 + 3800 - ox;
    add(svg, 'line', {x1: x, x2: x, y1: Y(168), y2: base, stroke: '#eee'});
    add(svg, 'text', {x: 0, y: 0, 'text-anchor': 'middle', transform: `translate(${x + 2} ${base + 24}) rotate(-45)`}, t);
  });
  layers.forEach(([fill, ys], n) => {
    const next = layers[n + 1] ? layers[n + 1][1] : ys.map(() => 580);
    const pts = ys.map((y, i) => [X[i], Y(y)]);
    const back = next.map((y, i) => [X[i], Y(y)]).reverse();
    add(svg, 'polygon', {points: join([...pts, ...back]), fill, stroke: '#fff', 'stroke-opacity': 0.5, 'stroke-width': 1});
  });
  add(svg, 'polyline', {points: `585,${Y(168)} ${left},${Y(168)} ${left},${base} 585,${base}`, fill: 'none', stroke: '#ddd', 'stroke-width': 1.5});
}
```
